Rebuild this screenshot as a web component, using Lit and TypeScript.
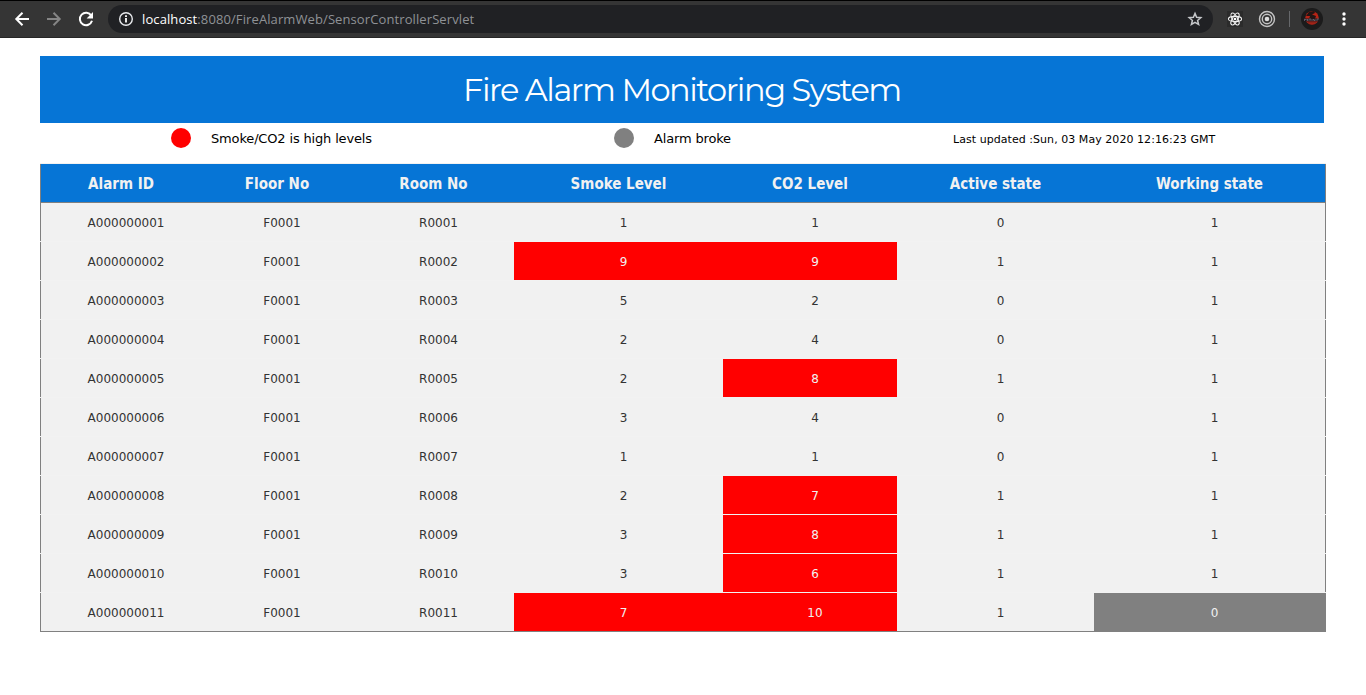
import { LitElement, html, css } from "lit";
import { customElement } from "lit/decorators.js";

type Row = [string, string, string, number, number, number, number];

const COLUMNS = ["Alarm ID", "Floor No", "Room No", "Smoke Level", "CO2 Level", "Active state", "Working state"];

const LEVELS: [number, number, number, number][] = [
  [1, 1, 0, 1],
  [9, 9, 1, 1],
  [5, 2, 0, 1],
  [2, 4, 0, 1],
  [2, 8, 1, 1],
  [3, 4, 0, 1],
  [1, 1, 0, 1],
  [2, 7, 1, 1],
  [3, 8, 1, 1],
  [3, 6, 1, 1],
  [7, 10, 1, 0],
];

const ROWS: Row[] = LEVELS.map((l, i) => [
  "A" + String(i + 1).padStart(9, "0"),
  "F0001",
  "R" + String(i + 1).padStart(4, "0"),
  ...l,
]);

@customElement("browser-bar")
export class BrowserBar extends LitElement {
  static styles = css`
    :host { display: block; }
    .bar {
      box-sizing: border-box; height: 38px; display: flex; align-items: center;
      background: #353535; border-top: 1px solid #000; border-bottom: 1px solid #262626;
      padding: 0 12px 1px 12px;
    }
    svg { display: block; flex: none; }
    .nav { margin-right: 12px; }
    .address {
      flex: none; width: 1105px; height: 28px; box-sizing: border-box; border-radius: 14px;
      background: #202124; display: flex; align-items: center; padding: 0 9px 0 10px;
      font: 14px "Open Sans", sans-serif; color: #8f9296;
    }
    .url { flex: 1; margin-left: 8px; white-space: nowrap; font-size: 13px; letter-spacing: 0.1px; }
    .host { color: #fff; }
    .react { margin-left: 13px; }
    .rings { margin-left: 14px; }
    .divider { width: 1px; height: 16px; background: #66686b; margin: 0 11px 0 13px; }
    .dots { margin-left: 12px; }
  `;

  render() {
    return html`<div class="bar">
      <svg class="nav" width="20" height="20" viewBox="0 0 20 20" fill="none" stroke="#fff" stroke-width="2"><path d="M17 10H4.500M10.500 3.800 4.300 10l6.200 6.200" /></svg>
      <svg class="nav" width="20" height="20" viewBox="0 0 20 20" fill="none" stroke="#858585" stroke-width="2"><path d="M3 10h12.500M9.500 3.800 15.700 10l-6.200 6.200" /></svg>
      <svg class="nav" width="20" height="20" viewBox="0 0 20 20"><path d="M15.300 6.600A6.200 6.200 0 1 0 16 11.800" fill="none" stroke="#fff" stroke-width="2" /><path d="M17 3v6.400h-6.400z" fill="#fff" /></svg>
      <div class="address">
        <svg width="16" height="16" viewBox="0 0 16 16"><circle cx="8" cy="8" r="6.300" fill="none" stroke="#e8eaed" stroke-width="1.400" /><path d="M7.100 7h1.800v4.500H7.100zM7.100 4.300h1.800v1.700H7.100z" fill="#fff" /></svg>
        <span class="url"><span class="host">localhost</span>:8080/FireAlarmWeb/SensorControllerServlet</span>
        <svg width="18" height="18" viewBox="0 0 18 18" fill="none" stroke="#c5c7ca" stroke-width="1.500"><path d="m9 3.400 1.600 3.900 4.200.4-3.200 2.700 1 4.100L9 12.300l-3.600 2.200 1-4.100-3.200-2.700 4.200-.4z" /></svg>
      </div>
      <svg class="react" width="18" height="18" viewBox="0 0 18 18" fill="none" stroke="#f1f1f1" stroke-width="1.100">
        <rect x="1" y="1" width="16" height="16" fill="#2b2b2b" stroke="none" />
        <ellipse cx="9" cy="9" rx="6.600" ry="2.600" /><ellipse cx="9" cy="9" rx="6.600" ry="2.600" transform="rotate(60 9 9)" /><ellipse cx="9" cy="9" rx="6.600" ry="2.600" transform="rotate(120 9 9)" /><circle cx="9" cy="9" r="1.300" fill="#fff" stroke="none" />
      </svg>
      <svg class="rings" width="18" height="18" viewBox="0 0 18 18" fill="none" stroke="#c4c4c4" stroke-width="1.400"><circle cx="9" cy="9" r="7.500" /><circle cx="9" cy="9" r="4.700" /><circle cx="9" cy="9" r="2.300" fill="#ddd" stroke="none" /></svg>
      <div class="divider"></div>
      <svg width="22" height="22" viewBox="0 0 22 22">
        <circle cx="11" cy="11" r="11" fill="#1b1b1b" />
        <circle cx="11" cy="10" r="6.800" fill="#b82416" />
        <path d="M5 8 8 4l5-1 1 2-3 1.500 4 1.500-1 3H8l1-3z" fill="#221514" />
        <path d="M2.500 10.500h17v3h-17z" fill="#20191f" /><path d="M3.500 13v-2l2 1 1-1v2m1.500 0v-2h2v2m2 0v-2l2 2v-2m2 2v-2h2" stroke="#77737f" stroke-width=".7" fill="none" />
        <path d="M6 14h10l-2 1.600H8z" fill="#8e2218" />
      </svg>
      <svg class="dots" width="18" height="18" viewBox="0 0 18 18" fill="#fff"><circle cx="9" cy="4" r="1.700" /><circle cx="9" cy="9" r="1.700" /><circle cx="9" cy="14" r="1.700" /></svg>
    </div>`;
  }
}

@customElement("alarm-table")
export class AlarmTable extends LitElement {
  static styles = css`
    :host { display: block; }
    .table { width: 1286px; margin-left: 40px; font-family: "DejaVu Sans", sans-serif; border-top: 1px solid #f2f2f2; }
    .row {
      display: grid; grid-template-columns: 161px 152px 161px 209px 174px 197px 232px;
      height: 38px; border-bottom: 1px solid #f2f2f2; background: #f1f1f1;
      color: #333; font-size: 12px;
    }
    .cell { display: flex; align-items: center; justify-content: center; padding: 1px 0 0 10px; white-space: nowrap; }
    .cell:first-child { border-left: 1px solid #808080; }
    .cell:last-child { border-right: 1px solid #808080; }
    .row:last-child { border-bottom-color: #808080; }
    .head {
      background: #0675d6; color: #f1f1f1; border-bottom-color: #808080;
      font-family: "DejaVu Sans Condensed", "DejaVu Sans", sans-serif; font-stretch: condensed;
      font-size: 15px; font-weight: 700; letter-spacing: 0;
    }
    .head .cell { padding: 2px 0 0; }
    .cell.high { background: #f00; color: #f1f1f1; }
    .cell.broken { background: #808080; color: #f1f1f1; }
  `;

  private tone(col: number, value: string | number) {
    if ((col === 3 || col === 4) && Number(value) > 5) return "high";
    return col === 6 && value === 0 ? "broken" : "";
  }

  render() {
    return html`<div class="table" role="table">
      <div class="row head" role="row">${COLUMNS.map((c) => html`<div class="cell" role="columnheader"><span>${c}</span></div>`)}</div>
      ${ROWS.map((r) => html`<div class="row" role="row">${r.map((v, i) => html`<div class="cell ${this.tone(i, v)}" role="cell"><span>${v}</span></div>`)}</div>`)}
    </div>`;
  }
}

@customElement("app-root")
export class AppRoot extends LitElement {
  static styles = css`
    :host { display: block; height: 695px; background: #fff; overflow: hidden; }
    .title {
      box-sizing: border-box; margin: 18px 42px 0 40px; height: 67px; padding-bottom: 1px; background: #0675d6; color: #fff;
      display: flex; align-items: center; justify-content: center;
      font: 400 32px "Montserrat", "Lato", sans-serif; letter-spacing: -1.46px; white-space: nowrap;
    }
    .legend { display: flex; align-items: center; height: 30px; margin-bottom: 10px; padding-left: 171px; font: 13px "DejaVu Sans", sans-serif; color: #000; white-space: nowrap; }
    .dot { width: 20px; height: 20px; border-radius: 50%; margin-right: 20px; flex: none; }
    .red { background: #f00; }
    .gray { background: #808080; }
    .label { width: 403px; letter-spacing: -0.16px; padding-top: 1px; }
    .label.second { width: 299px; }
    .updated { font-size: 11px; letter-spacing: 0.05px; padding-top: 2px; }
  `;

  render() {
    return html`
      <browser-bar></browser-bar>
      <div class="title"><span>Fire Alarm Monitoring System</span></div>
      <div class="legend">
        <div class="dot red"></div><div class="label">Smoke/CO2 is high levels</div>
        <div class="dot gray"></div><div class="label second">Alarm broke</div>
        <div class="updated">Last updated :Sun, 03 May 2020 12:16:23 GMT</div>
      </div>
      <alarm-table></alarm-table>
    `;
  }
}
